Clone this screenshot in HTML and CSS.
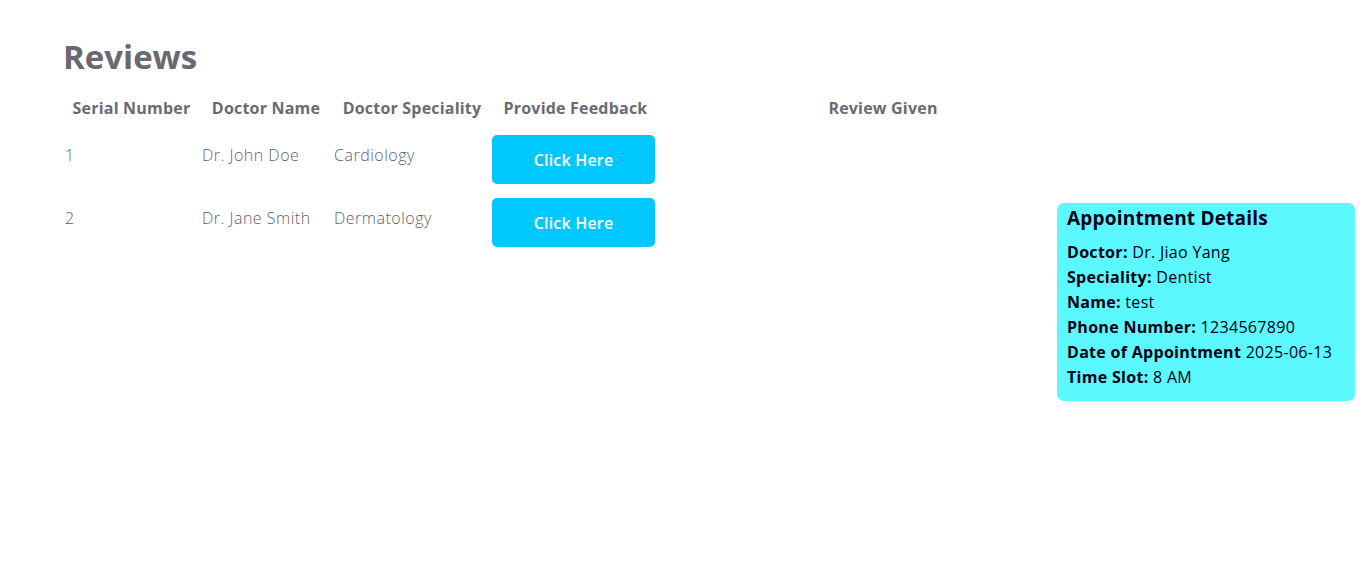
FILE: index.html
```html
<!DOCTYPE html>
<html lang="en">
<head>
<meta charset="utf-8">
<title>Reviews</title>
<link rel="stylesheet" href="styles.css">
</head>
<body>
<main class="page">
  <h1 class="title">Reviews</h1>
  <table class="reviews">
    <thead>
      <tr>
        <th class="c-serial">Serial Number</th>
        <th class="c-name">Doctor Name</th>
        <th class="c-spec">Doctor Speciality</th>
        <th class="c-fb">Provide Feedback</th>
        <th class="c-review">Review Given</th>
      </tr>
    </thead>
    <tbody>
      <tr>
        <td>1</td>
        <td>Dr. John Doe</td>
        <td>Cardiology</td>
        <td class="cell-btn"><button class="btn">Click Here</button></td>
        <td></td>
      </tr>
      <tr>
        <td>2</td>
        <td>Dr. Jane Smith</td>
        <td>Dermatology</td>
        <td class="cell-btn"><button class="btn">Click Here</button></td>
        <td></td>
      </tr>
    </tbody>
  </table>
</main>
<aside class="appt">
  <h3 class="appt-title">Appointment Details</h3>
  <p><strong>Doctor:</strong> Dr. Jiao Yang</p>
  <p><strong>Speciality:</strong> Dentist</p>
  <p><strong>Name:</strong> test</p>
  <p><strong>Phone Number:</strong> 1234567890</p>
  <p><strong>Date of Appointment</strong> 2025-06-13</p>
  <p><strong>Time Slot:</strong> 8 AM</p>
</aside>
</body>
</html>
```
FILE: styles.css
```css
html, body {
  margin: 0;
  background: #fff;
}
body {
  font-family: "Open Sans", "Noto Sans", sans-serif;
  position: relative;
  min-height: 580px;
}
.page {
  padding: 32px 0 0 63px;
}
.title {
  margin: 0 0 14px 0;
  font-size: 33px;
  font-weight: 700;
  color: #696971;
  line-height: 50px;
}
.reviews {
  border-collapse: collapse;
  table-layout: fixed;
  width: 1044px;
}
.reviews th {
  font-size: 16px;
  font-weight: 700;
  letter-spacing: 0.2px;
  color: #6a6a73;
  text-align: center;
  padding: 1px 0 15px 0;
  height: 22px;
  line-height: 22px;
}
.c-serial { width: 137px; }
.c-name { width: 132px; }
.c-spec { width: 160px; }
.c-fb { width: 167px; }
.reviews td {
  font-size: 16px;
  font-weight: 300;
  letter-spacing: 0.5px;
  color: #5f5f68;
  vertical-align: top;
  padding: 9px 0 13px 2px;
  line-height: 24px;
}
.reviews td.cell-btn { padding: 1px 0 13px 0; }
.btn {
  width: 163px;
  height: 49px;
  border: none;
  border-radius: 5px;
  background: #00c8ff;
  color: #fff;
  font-family: "Open Sans", "Noto Sans", sans-serif;
  font-size: 16px;
  font-weight: 600;
  letter-spacing: 0.2px;
  cursor: pointer;
  margin: 0;
  padding: 0;
  display: block;
}
.appt {
  position: absolute;
  left: 1057px;
  top: 203px;
  width: 278px;
  padding: 1px 10px 11px 10px;
  background: #5cf8ff;
  border-radius: 7px;
  color: #000014;
}
.appt-title {
  margin: 0 0 8px 0;
  font-size: 19px;
  font-weight: 700;
  letter-spacing: 0.2px;
  line-height: 28px;
}
.appt p {
  margin: 0;
  font-size: 16px;
  letter-spacing: 0.3px;
  line-height: 25px;
  font-weight: 400;
}
.appt strong { font-weight: 700; }
```
